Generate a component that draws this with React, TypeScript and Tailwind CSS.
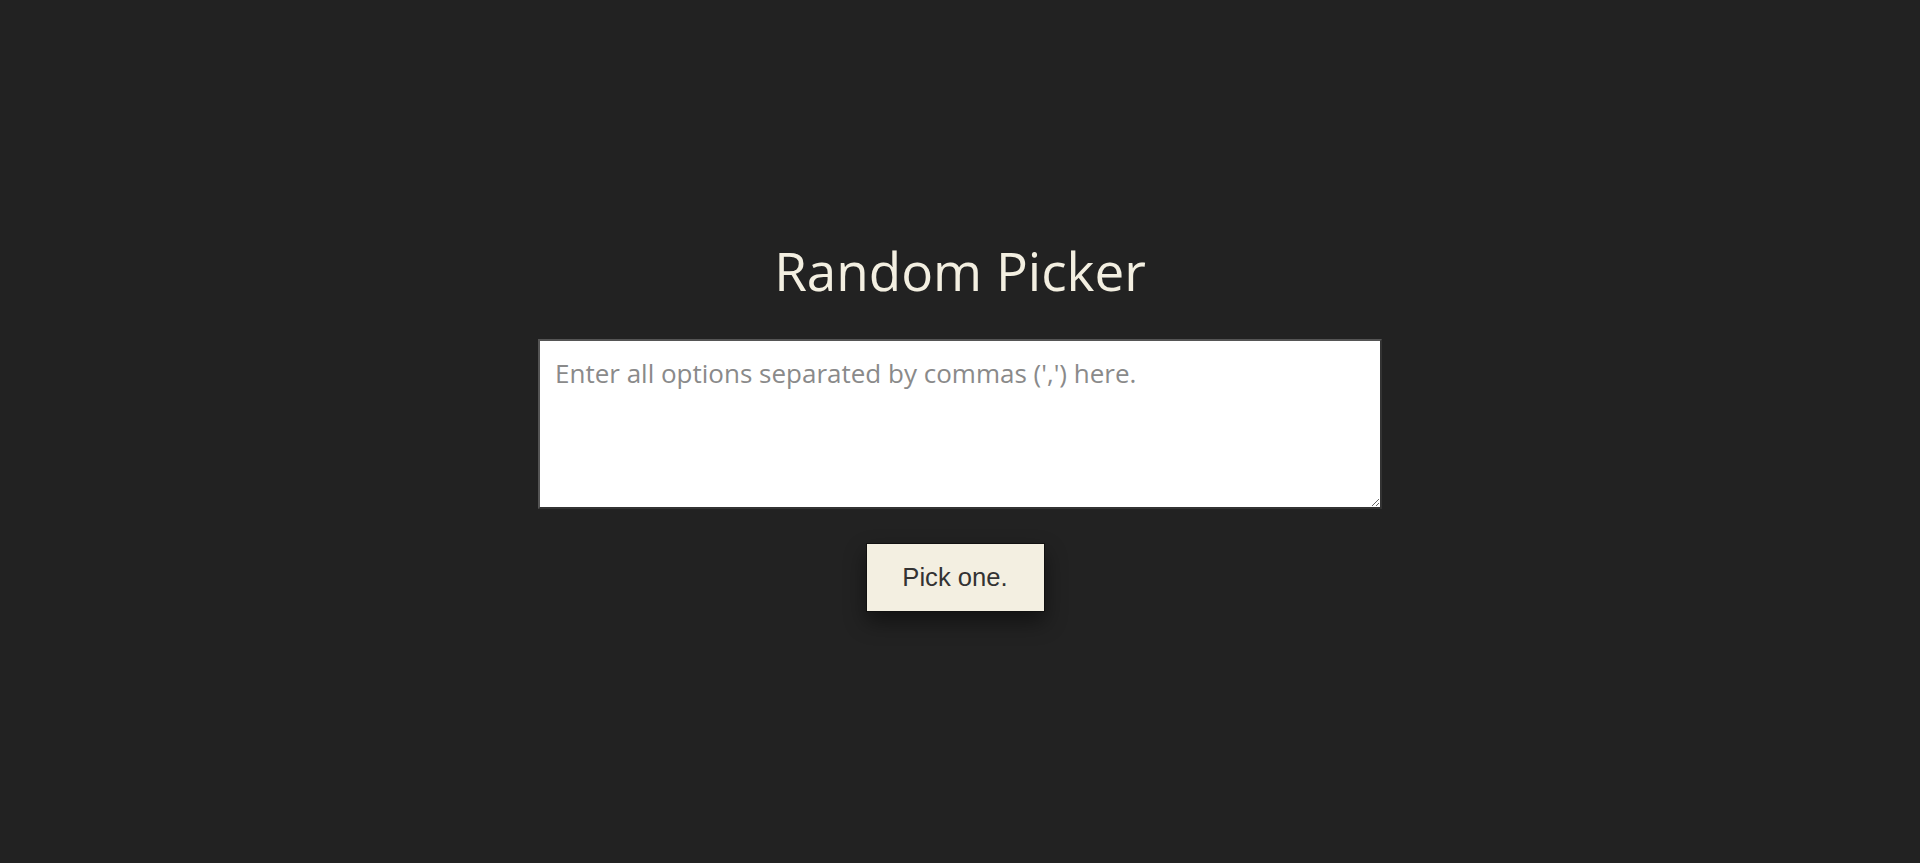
export default function App() {
  return (
    <div className="min-h-[863px] w-full bg-[#222222] flex flex-col items-center">
      <h1 className="mt-[238px] text-[53px] leading-[66px] text-[#f3efe1] font-medium font-['Open_Sans',sans-serif]">Random Picker</h1>
      <textarea
        className="mt-[35px] w-[844px] h-[170px] bg-white border-2 border-[#333] border-t-[#555] border-l-[#555] px-[15px] pt-[15px] pb-[11px] text-[26px] leading-[34px] text-[#333] placeholder:text-[#8a8a8a] outline-none font-['Open_Sans',sans-serif]"
        placeholder="Enter all options separated by commas (',') here."
      />
      <button className="mt-[34px] mr-[10px] w-[179px] h-[69px] bg-[#f3efe1] border border-[#111] text-[25.6px] text-[#333] shadow-[0_10px_20px_rgba(0,0,0,0.45)] font-['Liberation_Sans',Arial,sans-serif]">
        Pick one.
      </button>
    </div>
  );
}
